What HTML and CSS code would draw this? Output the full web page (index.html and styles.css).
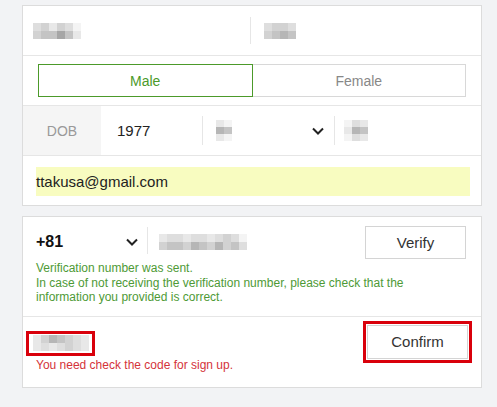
FILE: index.html
```html
<!DOCTYPE html>
<html>
<head>
<meta charset="utf-8">
<link rel="stylesheet" href="styles.css">
</head>
<body>
<div class="page">
  <div class="card">
    <div class="row name-row">
      <div class="half">
        <div class="mosaic cols6"><i class="g2"></i><i class="g3"></i><i class="g1"></i><i class="g3"></i><i class="g2"></i><i class="g0"></i><i class="g3"></i><i class="g4"></i><i class="g4"></i><i class="g6"></i><i class="g4"></i><i class="g1"></i></div>
      </div>
      <div class="half sep-left">
        <div class="mosaic cols4"><i class="g2"></i><i class="g3"></i><i class="g3"></i><i class="g2"></i><i class="g3"></i><i class="g4"></i><i class="g5"></i><i class="g4"></i></div>
      </div>
    </div>
    <div class="row gender-row">
      <button class="gender active">Male</button>
      <button class="gender">Female</button>
    </div>
    <div class="row dob-row">
      <div class="dob-label">DOB</div>
      <div class="dob-year">1977</div>
      <div class="dob-month">
        <div class="mosaic cols2 rows3"><i class="g1"></i><i class="g0"></i><i class="g5"></i><i class="g4"></i><i class="g1"></i><i class="g0"></i></div>
        <svg class="chev" width="12" height="8" viewBox="0 0 12 8"><path d="M1 1.5 L6 6.5 L11 1.5" fill="none" stroke="#222" stroke-width="2"/></svg>
      </div>
      <div class="dob-day">
        <div class="mosaic cols3 rows3"><i class="g0"></i><i class="g2"></i><i class="g1"></i><i class="g1"></i><i class="g5"></i><i class="g4"></i><i class="g0"></i><i class="g2"></i><i class="g1"></i></div>
      </div>
    </div>
    <div class="row email-row">
      <div class="email">ttakusa@gmail.com</div>
    </div>
  </div>

  <div class="card card2">
    <div class="phone-section">
      <div class="phone-row">
        <div class="cc">+81
          <svg class="chev" width="12" height="8" viewBox="0 0 12 8"><path d="M1 1.5 L6 6.5 L11 1.5" fill="none" stroke="#222" stroke-width="2"/></svg>
        </div>
        <div class="phone">
          <div class="mosaic cols11"><i class="g1"></i><i class="g2"></i><i class="g2"></i><i class="g1"></i><i class="g2"></i><i class="g2"></i><i class="g1"></i><i class="g2"></i><i class="g3"></i><i class="g2"></i><i class="g0"></i><i class="g3"></i><i class="g4"></i><i class="g4"></i><i class="g3"></i><i class="g5"></i><i class="g4"></i><i class="g3"></i><i class="g5"></i><i class="g3"></i><i class="g4"></i><i class="g2"></i></div>
        </div>
        <button class="btn">Verify</button>
      </div>
      <p class="msg">Verification number was sent.<br>In case of not receiving the verification number, please check that the information you provided is correct.</p>
    </div>
    <div class="code-section">
      <div class="code-col">
        <div class="code-input">
          <div class="mosaic cols7"><i class="g1"></i><i class="g3"></i><i class="g5"></i><i class="g4"></i><i class="g3"></i><i class="g2"></i><i class="g1"></i><i class="g1"></i><i class="g2"></i><i class="g1"></i><i class="g2"></i><i class="g3"></i><i class="g2"></i><i class="g1"></i></div>
        </div>
        <p class="err">You need check the code for sign up.</p>
      </div>
      <div class="confirm-wrap"><button class="btn">Confirm</button></div>
    </div>
  </div>
</div>
</body>
</html>
```

FILE: styles.css
```css
* { box-sizing: border-box; }
html, body { margin: 0; padding: 0; }
body {
  background: #f2f3f5;
  font-family: "Liberation Sans", Arial, sans-serif;
  color: #222;
}
.page { padding: 5px 0 0 22px; }
.card {
  width: 460px;
  background: #fff;
  border: 1px solid #dcdcdc;
}
.card2 { margin-top: 10px; }
.row { display: flex; border-bottom: 1px solid #e6e6e6; }
.row:last-child { border-bottom: none; }

.mosaic { display: grid; grid-auto-rows: 8px; }
.mosaic i { display: block; }
.cols6 { grid-template-columns: repeat(6, 8px); }
.cols4 { grid-template-columns: repeat(4, 8px); }
.cols2 { grid-template-columns: repeat(2, 8px); grid-auto-rows: 7px; }
.cols3 { grid-template-columns: repeat(3, 8px); grid-auto-rows: 7px; }
.cols7 { grid-template-columns: repeat(7, 8px); }
.cols11 { grid-template-columns: repeat(11, 8px); }
.g0 { background: #f4f4f4; }
.g1 { background: #e8e8e8; }
.g2 { background: #dedede; }
.g3 { background: #d2d2d2; }
.g4 { background: #c4c4c4; }
.g5 { background: #b6b6b6; }
.g6 { background: #a6a6a6; }

.name-row { height: 50px; }
.half { flex: 1; display: flex; align-items: center; padding-left: 10px; }
.sep-left { position: relative; padding-left: 14px; }
.sep-left::before {
  content: ""; position: absolute; left: 0; top: 11px; bottom: 11px;
  width: 1px; background: #e6e6e6;
}

.gender-row { height: 50px; padding: 8px 15px 8px 15px; }
.gender {
  flex: 1; height: 33px; background: #fff;
  border: 1px solid #d8d8d8;
  font-family: inherit; font-size: 14px; color: #888;
  padding: 0; margin: 0;
}
.gender + .gender { border-left: none; }
.gender.active { border-color: #4c9a2a; color: #4c9a2a; }

.dob-row { height: 50px; align-items: stretch; }
.dob-label {
  width: 78px; background: #f5f5f5; color: #999; font-size: 14px;
  display: flex; align-items: center; justify-content: center;
}
.dob-year {
  width: 101px; padding-left: 16px; font-size: 15px; color: #222;
  display: flex; align-items: center;
}
.dob-month, .dob-day { display: flex; align-items: center; position: relative; }
.dob-month { width: 132px; padding: 0 10px 0 14px; justify-content: space-between; }
.dob-month::before, .dob-day::before {
  content: ""; position: absolute; left: 0; top: 10px; bottom: 10px;
  width: 1px; background: #e6e6e6;
}
.dob-day { flex: 1; padding-left: 10px; }
.chev { display: block; }

.email-row { height: 49px; padding: 11px 11px 0 13px; }
.email {
  flex: 1; height: 29px; background: #f8fcc0;
  font-size: 15px; color: #222;
  display: flex; align-items: center;
}

.phone-section { padding: 8px 15px 11px 13px; border-bottom: 1px solid #e6e6e6; }
.phone-row { display: flex; align-items: center; height: 34px; }
.cc {
  width: 111px; font-size: 16px; font-weight: bold; color: #111;
  display: flex; align-items: center; justify-content: space-between;
  padding-right: 9px;
}
.phone {
  flex: 1; align-self: stretch; display: flex; align-items: center;
  padding-left: 12px; position: relative; margin: 1px 0;
}
.phone::before {
  content: ""; position: absolute; left: 0; top: 1px; bottom: 4px;
  width: 1px; background: #e6e6e6;
}
.btn {
  width: 101px; height: 33px; background: #fff;
  border: 1px solid #d4d4d4; font-family: inherit; font-size: 15px; color: #333;
  padding: 0; margin: 0;
}
.msg {
  margin: 2px 0 0 0; font-size: 12px; line-height: 14.5px; color: #4e9a36;
  padding-right: 40px;
}

.code-section { display: flex; justify-content: space-between; height: 70px; padding: 4px 9px 0 3px; }
.code-col { padding-top: 10px; }
.code-input {
  width: 69px; height: 25px; border: 3px solid #d9000b;
  display: flex; align-items: center; padding-left: 4px;
}
.err { margin: 2px 0 0 10px; font-size: 12px; color: #d4333a; }
.confirm-wrap { border: 3px solid #d9000b; padding: 1px; height: 42px; }
.confirm-wrap .btn { height: 34px; }
```
